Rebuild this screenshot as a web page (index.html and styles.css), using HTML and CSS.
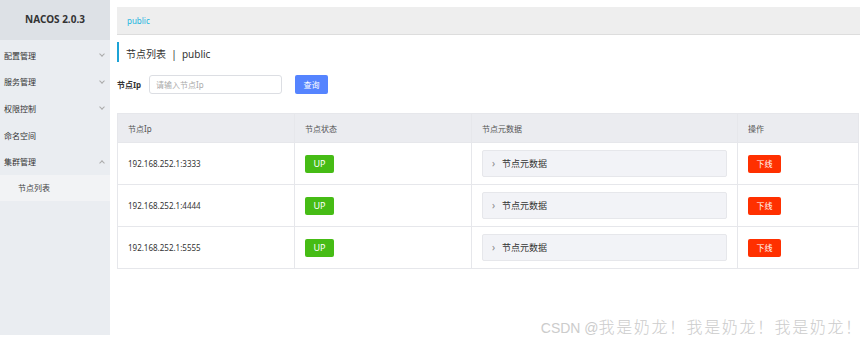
FILE: index.html
```html
<!DOCTYPE html>
<html lang="zh-CN">
<head>
    <meta charset="UTF-8">
    <meta name="viewport" content="width=device-width, initial-scale=1.0">
    <title>Nacos - 节点列表</title>
    <link rel="stylesheet" href="styles.css">
</head>
<body>
    <div class="layout">
        <!-- 左侧菜单 -->
        <aside class="sidebar">
            <div class="logo">NACOS 2.0.3</div>
            <ul class="menu">
                <li class="menu-item"><span>配置管理</span><span class="arrow down"></span></li>
                <li class="menu-item"><span>服务管理</span><span class="arrow down"></span></li>
                <li class="menu-item"><span>权限控制</span><span class="arrow down"></span></li>
                <li class="menu-item"><span>命名空间</span></li>
                <li class="menu-item"><span>集群管理</span><span class="arrow up"></span></li>
                <li class="menu-sub">节点列表</li>
            </ul>
        </aside>

        <main class="main">
            <div class="namespace-bar"><span class="ns-link">public</span></div>

            <h2 class="page-title">节点列表 &nbsp;|&nbsp; public</h2>

            <div class="search-row">
                <label class="search-label" for="nodeIp">节点Ip</label>
                <input type="text" id="nodeIp" class="search-input" placeholder="请输入节点Ip">
                <button class="btn-query">查询</button>
            </div>

            <table class="node-table">
                <thead>
                    <tr>
                        <th class="col-ip">节点Ip</th>
                        <th class="col-state">节点状态</th>
                        <th class="col-meta">节点元数据</th>
                        <th>操作</th>
                    </tr>
                </thead>
                <tbody>
                    <tr>
                        <td>192.168.252.1:3333</td>
                        <td><span class="tag-up">UP</span></td>
                        <td><div class="meta-box"><span class="meta-arrow">›</span>节点元数据</div></td>
                        <td><button class="btn-offline">下线</button></td>
                    </tr>
                    <tr>
                        <td>192.168.252.1:4444</td>
                        <td><span class="tag-up">UP</span></td>
                        <td><div class="meta-box"><span class="meta-arrow">›</span>节点元数据</div></td>
                        <td><button class="btn-offline">下线</button></td>
                    </tr>
                    <tr>
                        <td>192.168.252.1:5555</td>
                        <td><span class="tag-up">UP</span></td>
                        <td><div class="meta-box"><span class="meta-arrow">›</span>节点元数据</div></td>
                        <td><button class="btn-offline">下线</button></td>
                    </tr>
                </tbody>
            </table>
        </main>
    </div>

    <div class="watermark">CSDN @<span class="wm-name">我是奶龙！我是奶龙！我是奶龙</span><span class="wm-last">！</span></div>
</body>
</html>
```

FILE: styles.css
```css
/* 基础样式 */
body {
    margin: 0;
    font-family: "Noto Sans", "Noto Sans CJK SC", sans-serif;
    background-color: #fff;
    color: #333;
    height: 343px;
    overflow: hidden;
    position: relative;
}
.layout {
    display: flex;
    align-items: flex-start;
}

/* 侧边栏 */
.sidebar {
    width: 110px;
    height: 335px;
    background-color: #eaedf1;
    flex-shrink: 0;
}
.logo {
    height: 40px;
    line-height: 38px;
    background-color: #dde1e6;
    text-align: center;
    font-weight: bold;
    font-size: 10px;
    color: #333;
}
.menu {
    list-style: none;
    margin: 0;
    padding: 2px 0 0;
}
.menu-item {
    height: 26.6px;
    display: flex;
    align-items: center;
    justify-content: space-between;
    padding: 0 6px 0 4px;
    font-size: 8px;
    color: #333;
}
.menu-sub {
    height: 26px;
    line-height: 26px;
    padding-left: 18px;
    font-size: 8px;
    color: #444;
    background-color: #f2f3f5;
}
.arrow {
    width: 3px;
    height: 3px;
    border-right: 1px solid #aaa;
    border-bottom: 1px solid #aaa;
}
.arrow.down {
    transform: rotate(45deg);
    margin-top: -2px;
}
.arrow.up {
    transform: rotate(-135deg);
    margin-top: 2px;
}

/* 主内容 */
.main {
    flex: 1;
    padding: 7px 2px 0 7px;
}
.namespace-bar {
    height: 27px;
    background-color: #eeeeee;
    border-bottom: 1px solid #ddd;
    display: flex;
    align-items: center;
    padding-left: 10px;
}
.ns-link {
    color: #20b5e0;
    font-size: 8px;
}
.page-title {
    margin: 7px 0 0;
    height: 20px;
    line-height: 25px;
    border-left: 2px solid #1ca3d6;
    padding-left: 7px;
    font-size: 10px;
    font-weight: normal;
    color: #333;
}
.search-row {
    display: flex;
    align-items: center;
    margin-top: 13px;
}
.search-label {
    font-size: 8px;
    font-weight: bold;
    color: #333;
    width: 32px;
}
.search-input {
    width: 133px;
    height: 19px;
    box-sizing: border-box;
    border: 1px solid #dcdee3;
    border-radius: 3px;
    padding: 0 6px;
    font-size: 8px;
    font-family: inherit;
}
.search-input::placeholder {
    color: #aaa;
}
.btn-query {
    margin-left: 13px;
    width: 33px;
    height: 19px;
    border: none;
    border-radius: 2px;
    background-color: #5584ff;
    color: #fff;
    font-size: 8px;
    font-family: inherit;
    padding: 0;
}

/* 表格 */
.node-table {
    margin-top: 19px;
    width: 742px;
    border-collapse: collapse;
    border: 1px solid #e6e7eb;
    font-size: 8px;
    color: #333;
}
.node-table th {
    background-color: #ebecf0;
    height: 28px;
    text-align: left;
    font-weight: normal;
    padding: 0 10px;
    border-left: 1px solid #e6e7eb;
    color: #555;
}
.node-table td {
    height: 41px;
    padding: 0 10px;
    border-left: 1px solid #e6e7eb;
    border-top: 1px solid #e6e7eb;
}
.col-ip {
    width: 156px;
}
.col-state {
    width: 156px;
}
.col-meta {
    width: 245px;
}
.tag-up {
    display: inline-block;
    width: 29px;
    height: 18px;
    line-height: 18px;
    text-align: center;
    background-color: #46bc15;
    color: #fff;
    font-size: 9px;
    border-radius: 2px;
}
.meta-box {
    height: 25px;
    line-height: 25px;
    background-color: #f2f3f7;
    border: 1px solid #e6e7eb;
    border-radius: 2px;
    font-size: 9px;
    color: #333;
    padding-left: 9px;
}
.meta-arrow {
    color: #888;
    font-size: 10px;
    margin-right: 7px;
}
.btn-offline {
    width: 33px;
    height: 18px;
    border: none;
    border-radius: 2px;
    background-color: #ff3000;
    color: #fff;
    font-size: 8px;
    font-family: inherit;
    padding: 0;
}

/* 水印 */
.watermark {
    position: absolute;
    right: 1px;
    bottom: 5px;
    font-family: "Liberation Sans", "Noto Sans CJK SC", sans-serif;
    font-size: 14px;
    color: #cccccc;
}
.wm-name,
.wm-last {
    font-size: 16px;
    font-weight: 300;
}
.wm-name {
    letter-spacing: 1.6px;
}
```
